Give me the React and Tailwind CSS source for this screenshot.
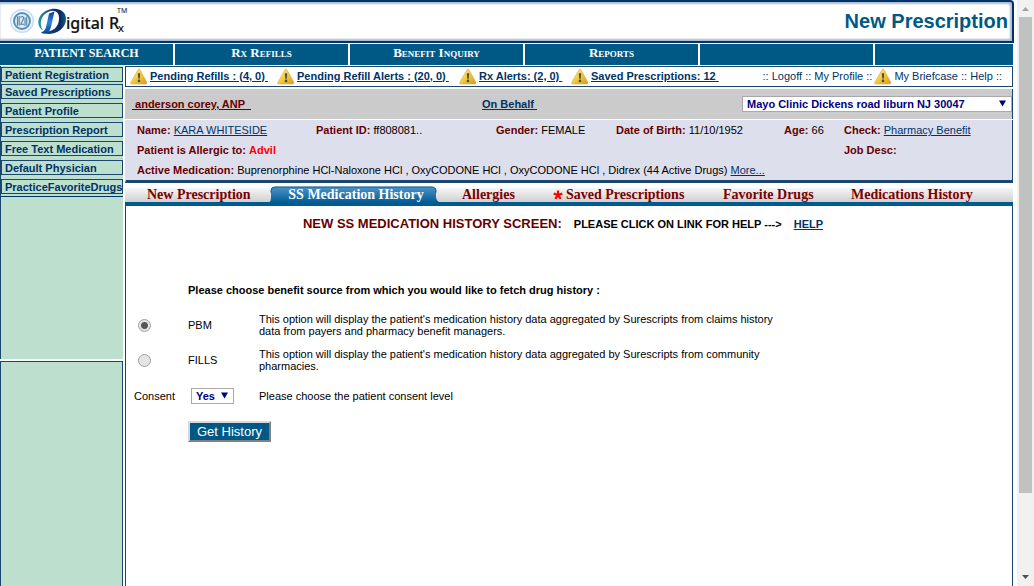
const warnPath = "M8.1 1.6 Q9 0 9.9 1.6 L16.7 14 Q17.4 16 15.5 16 L2 16 Q0 16 1 14 Z";

function Warning() {
  return (
    <svg width="18" height="17" viewBox="0 0 18 17" className="shrink-0" aria-hidden="true">
      <defs>
        <linearGradient id="warn" x1="0" y1="0" x2="1" y2="1">
          <stop offset="0" stopColor="#fff3a8" />
          <stop offset="0.5" stopColor="#f5cb3c" />
          <stop offset="1" stopColor="#d99a14" />
        </linearGradient>
      </defs>
      <path d={warnPath} fill="url(#warn)" stroke="#d3ab45" strokeWidth="0.6" />
      <path d="M7.800 5.200h2.400l-.5 5.600H8.300z" fill="#4a4c50" />
      <circle cx="9" cy="12.900" r="1.300" fill="#4a4c50" />
    </svg>
  );
}

function Logo() {
  return (
    <svg width="122" height="34" viewBox="0 0 122 34" role="img" aria-label="Digital Rx">
      <defs>
        <linearGradient id="dee" x1="0" y1="0" x2="1" y2="0">
          <stop offset="0" stopColor="#17a3a3" />
          <stop offset="0.4" stopColor="#123f7c" />
          <stop offset="0.8" stopColor="#0e2a66" />
          <stop offset="1" stopColor="#0e5f80" />
        </linearGradient>
        <linearGradient id="stem" x1="0" y1="0" x2="0" y2="1">
          <stop offset="0" stopColor="#0c3f90" />
          <stop offset="0.5" stopColor="#2d86e0" />
          <stop offset="1" stopColor="#0c3f90" />
        </linearGradient>
      </defs>
      <circle cx="14" cy="16" r="11.300" fill="#f4f9ff" stroke="#c3dbf5" strokeWidth="1.400" />
      <circle cx="14" cy="16" r="8" fill="#dfeaf3" stroke="#5a8fb5" strokeWidth="2" />
      <path d="M9.500 11.500v9M11.200 11v9.500M17 12.500v8.500M18.700 11.500v9" stroke="#4d83ab" strokeWidth="1.100" />
      <path d="M12.500 12.500q2.500-2 3 0.300q0 2-2.800 6.400h3.400" fill="none" stroke="#4d83ab" strokeWidth="1.100" />
      <path d="M35 25.500C27 20 30 9 39 5.500C48 1.500 58 5 58 14C58 23 49 29 40 29L33 28L34.500 26.500C44 27.500 50.500 23 51 14C51.500 7 46.500 4.500 41 6.500C33 9.500 30.500 19 35 25.500Z" fill="url(#dee)" />
      <path d="M41 8.500L46.500 6.500L43 22Q41.500 28 36.500 28.500L33 28Q37.500 26 38.500 20Z" fill="url(#stem)" />
      <text x="58" y="24" fontSize="16" fontWeight="500" fontFamily="Noto Sans, sans-serif" fill="#111" stroke="#111" strokeWidth="0.200">igital</text>
      <text x="101" y="24" fontSize="16" fontWeight="500" fontFamily="Noto Sans, sans-serif" fill="#111" stroke="#111" strokeWidth="0.200">R</text>
      <text x="110" y="27" fontSize="11" fontWeight="500" fontFamily="Noto Sans, sans-serif" fill="#111">x</text>
      <text x="109" y="8" fontSize="7" fontFamily="Noto Sans, sans-serif" fill="#111">TM</text>
    </svg>
  );
}

const nav = ["Rx Refills", "Benefit Inquiry", "Reports", ""];
const side = ["Patient Registration", "Saved Prescriptions", "Patient Profile", "Prescription Report", "Free Text Medication", "Default Physician", "PracticeFavoriteDrugs"];
const link = "text-[#003366] underline";

function Field({ label, children }) {
  return (
    <div className="whitespace-nowrap">
      <b className="text-[#660000]">{label}</b> {children}
    </div>
  );
}

function Alert({ children, className }) {
  return (
    <div className={className + " flex items-center gap-0.5 whitespace-pre"}>
      <Warning />
      <a href="#" className="pb-0.5 font-bold text-[#003366] underline">{children}</a>
    </div>
  );
}

function Sidebar() {
  return (
    <aside className="flex w-[123px] shrink-0 flex-col gap-0.5 font-bold text-[#003366]">
      <nav className="h-[293px] border-l border-[#1b4670] bg-[#bddfcd]">
        <ul className="border-b border-[#003366] pt-px">
          {side.map((s) => (
            <li key={s} className="mb-1 flex h-[15px] items-center border border-[#1b4670] pl-[3px] first:mb-0.5 last:mb-0.5">
              <a href="#">{s}</a>
            </li>
          ))}
        </ul>
      </nav>
      <div className="flex-1 border border-b-0 border-[#1b4670] bg-[#bddfcd]" />
    </aside>
  );
}

function Tabs() {
  return (
    <nav className="border-b-4 border-[#005a92] bg-white pt-[5px] font-['Liberation_Serif',serif] text-sm font-bold text-[#7b0000]">
      <div className="flex h-[14px] items-center bg-linear-to-b from-[#f6f6f6] to-[#d0d0d0] pl-[22px] leading-4 whitespace-nowrap">
        <a href="#" className="w-[121px]">New Prescription</a>
        <a href="#" className="relative w-[173px] pl-[3px] text-center text-white">
          <svg className="absolute inset-x-0 bottom-0 h-[17px] w-full" viewBox="0 0 173 18" preserveAspectRatio="none" aria-hidden="true">
            <defs>
              <linearGradient id="tab" x1="0" y1="0" x2="0" y2="1">
                <stop offset="0" stopColor="#4b93c8" />
                <stop offset="1" stopColor="#005a92" />
              </linearGradient>
            </defs>
            <path d="M0 18C3 16 3 14 3 11V5Q3 1 7 1H163Q168 1 168 5V11Q168 16 173 18Z" fill="url(#tab)" />
            <path d="M3 7V5Q3 1 7 1H163Q168 1 168 5V7" fill="none" stroke="#00568d" />
          </svg>
          <span className="relative">SS Medication History</span>
        </a>
        <a href="#" className="ml-[21px] w-[91px]">Allergies</a>
        <a href="#" className="flex w-[170px] items-center gap-[3px]">
          <svg width="10" height="10" viewBox="0 0 10 10" aria-hidden="true">
            <path d="M5 5V0.500M5 5L0.700 3.600M5 5L9.300 3.600M5 5L2.300 8.800M5 5L7.700 8.800" stroke="red" strokeWidth="2.2" />
          </svg>
          Saved Prescriptions
        </a>
        <a href="#" className="w-32">Favorite Drugs</a>
        <a href="#">Medications History</a>
      </div>
    </nav>
  );
}

function Source({ id, label, checked, children }) {
  return (
    <div className="flex h-[35px] items-center">
      <div className="w-[54px] pt-0.5 pl-1">
        <input id={id} type="radio" name="source" defaultChecked={checked} className="block size-[13px] appearance-none rounded-full border border-[#a0a0a0] bg-[#e4e4e4] checked:bg-[radial-gradient(circle,#555_0_3px,#e4e4e4_4px)]" />
      </div>
      <label htmlFor={id} className="w-[71px]">{label}</label>
      <p className="w-[530px] leading-3">{children}</p>
    </div>
  );
}

function Content() {
  return (
    <section className="px-2 pt-[9px]">
      <h1 className="flex items-baseline justify-center pr-3 text-[11px] leading-[18px] whitespace-nowrap">
        <span className="mr-3 text-[13px] font-bold text-[#660000]">NEW SS MEDICATION HISTORY SCREEN:</span>
        <span className="mr-3 font-bold">PLEASE CLICK ON LINK FOR HELP ---&gt;</span>
        <a href="#" className="font-bold text-[#003366] underline">HELP</a>
      </h1>
      <form className="pt-[49px]" onSubmit={(e) => e.preventDefault()}>
        <p className="pl-[54px] leading-4 font-bold">Please choose benefit source from which you would like to fetch drug history :</p>
        <div className="pt-[9px]">
          <Source id="pbm" label="PBM" checked>
            This option will display the patient's medication history data aggregated by Surescripts from claims history data from payers and pharmacy benefit managers.
          </Source>
          <Source id="fills" label="FILLS">
            This option will display the patient's medication history data aggregated by Surescripts from community pharmacies.
          </Source>
        </div>
        <div className="flex h-[37px] items-center">
          <label htmlFor="consent" className="w-[57px]">Consent</label>
          <div className="relative mr-[25px]">
            <select id="consent" className="block h-4 w-[43px] appearance-none border border-[#a9a9a9] bg-white pl-1 text-[11px] leading-3 font-bold text-[#000080]">
              <option>Yes</option>
              <option>No</option>
            </select>
            <svg className="pointer-events-none absolute top-1 right-1.5" width="7" height="7" viewBox="0 0 7 7" aria-hidden="true"><path d="M0 0.500H7L3.500 6.500Z" fill="#000080" /></svg>
          </div>
          <span>Please choose the patient consent level</span>
        </div>
        <button className="mt-[7px] ml-[54px] block h-[21px] border-2 border-t-[#d9d9d9] border-r-[#808080] border-b-[#808080] border-l-[#d9d9d9] bg-[#005984] px-[7px] text-[13px] leading-4 text-white">Get History</button>
      </form>
    </section>
  );
}

export default function App() {
  return (
    <div className="flex min-h-screen bg-white font-['Liberation_Sans',Arial,sans-serif] text-[11px] leading-[14px] text-black">
      <div className="flex min-w-0 flex-1 flex-col">
        <header className="mr-[-1px] flex h-[43px] items-center justify-between rounded-tr border-t-2 border-r-2 border-b-2 border-[#003366] bg-white pr-1 pl-2 shadow-[inset_-2px_2px_2px_#a9bccf,inset_0_-2px_2px_#a9bccf]">
          <Logo />
          <div className="pb-0.5 text-xl font-bold text-[#005984]">New Prescription</div>
        </header>
        <nav className="mt-px flex h-[21px] gap-0.5 font-['Liberation_Serif',serif] text-[13px] font-bold text-white [font-variant:small-caps]">
          <a href="#" className="flex w-[173px] justify-center bg-[#005984] text-xs leading-[18px]">PATIENT SEARCH</a>
          {nav.map((n, i) => (
            <a key={i} href="#" className="flex w-[173px] justify-center bg-[#005984] leading-[18px]">{n}</a>
          ))}
          <div className="flex-1 bg-[#005984]" />
        </nav>
        <div className="mt-px flex flex-1">
          <Sidebar />
          <main className="ml-0.5 flex min-w-0 flex-1 flex-col">
            <div className="flex h-[21px] items-center border border-[#1b4670] pr-2.5 pl-1 whitespace-nowrap">
              <Alert className="w-[147px]">{"Pending Refills : (4, 0) "}</Alert>
              <Alert className="w-[182px]">{"Pending Refill Alerts : (20, 0) "}</Alert>
              <Alert className="w-28">{"Rx Alerts: (2, 0) "}</Alert>
              <Alert className="flex-1">{"Saved Prescriptions: 12 "}</Alert>
              <div className="flex items-center gap-0.5 text-[#003366]">
                <span className="pb-0.5">:: <a href="#">Logoff</a> :: <a href="#">My Profile</a> ::</span>
                <Warning />
                <span className="pb-0.5"><a href="#">My Briefcase</a> :: <a href="#">Help</a> ::</span>
              </div>
            </div>
            <div className="mt-0.5 flex h-[30px] items-center border-x border-x-[#1b4670] border-l-[#cbcbcb] bg-[#cbcbcb] pl-1.5 font-bold">
              <a href="#" className="w-[350px] whitespace-pre text-[#660000] underline">{" anderson corey, ANP  "}</a>
              <a href="#" className="whitespace-pre text-[#003366] underline">{"On Behalf "}</a>
              <div className="relative ml-auto">
                <select aria-label="Location" className="block h-4 w-[270px] appearance-none border border-[#a9a9a9] bg-white pl-1 text-[11px] leading-3 font-bold text-[#000080]">
                  <option>Mayo Clinic Dickens road liburn NJ 30047</option>
                </select>
                <svg className="pointer-events-none absolute top-1 right-1.5" width="7" height="7" viewBox="0 0 7 7" aria-hidden="true"><path d="M0 0.500H7L3.500 6.500Z" fill="#000080" /></svg>
              </div>
            </div>
            <section className="mt-px h-[63px] border-x border-b-[3px] border-[#1b4670] border-l-[#dedfed] bg-[#dedfed] pl-[11px] leading-5">
              <div className="grid grid-cols-[179fr_180fr_120fr_168fr_60fr_168fr]">
                <Field label="Name:"><a href="#" className={link}>KARA WHITESIDE</a></Field>
                <Field label="Patient ID:">ff808081..</Field>
                <Field label="Gender:">FEMALE</Field>
                <Field label="Date of Birth:">11/10/1952</Field>
                <Field label="Age:">66</Field>
                <Field label="Check:"><a href="#" className={link}>Pharmacy Benefit</a></Field>
                <div className="col-span-5">
                  <Field label="Patient is Allergic to:"><b className="text-[#ff0000]">Advil</b></Field>
                </div>
                <Field label="Job Desc:" />
              </div>
              <Field label="Active Medication:">
                Buprenorphine HCl-Naloxone HCl , OxyCODONE HCl , OxyCODONE HCl , Didrex (44 Active Drugs) <a href="#" className={link}>More...</a>
              </Field>
            </section>
            <Tabs />
            <div className="flex-1 border-x border-[#1b4670]">
              <Content />
            </div>
          </main>
        </div>
      </div>
      <div className="ml-1 flex w-[17px] flex-col items-center bg-[#f1f1f1]" aria-hidden="true">
        <svg width="17" height="17" viewBox="0 0 17 17"><path d="M5 11L8.500 7L12 11Z" fill="#a3a3a3" /></svg>
        <div className="w-[13px] grow-[476] bg-[#c1c1c1]" />
        <div className="grow-[76]" />
        <svg width="17" height="17" viewBox="0 0 17 17"><path d="M5 6L8.500 10L12 6Z" fill="#505050" /></svg>
      </div>
    </div>
  );
}
